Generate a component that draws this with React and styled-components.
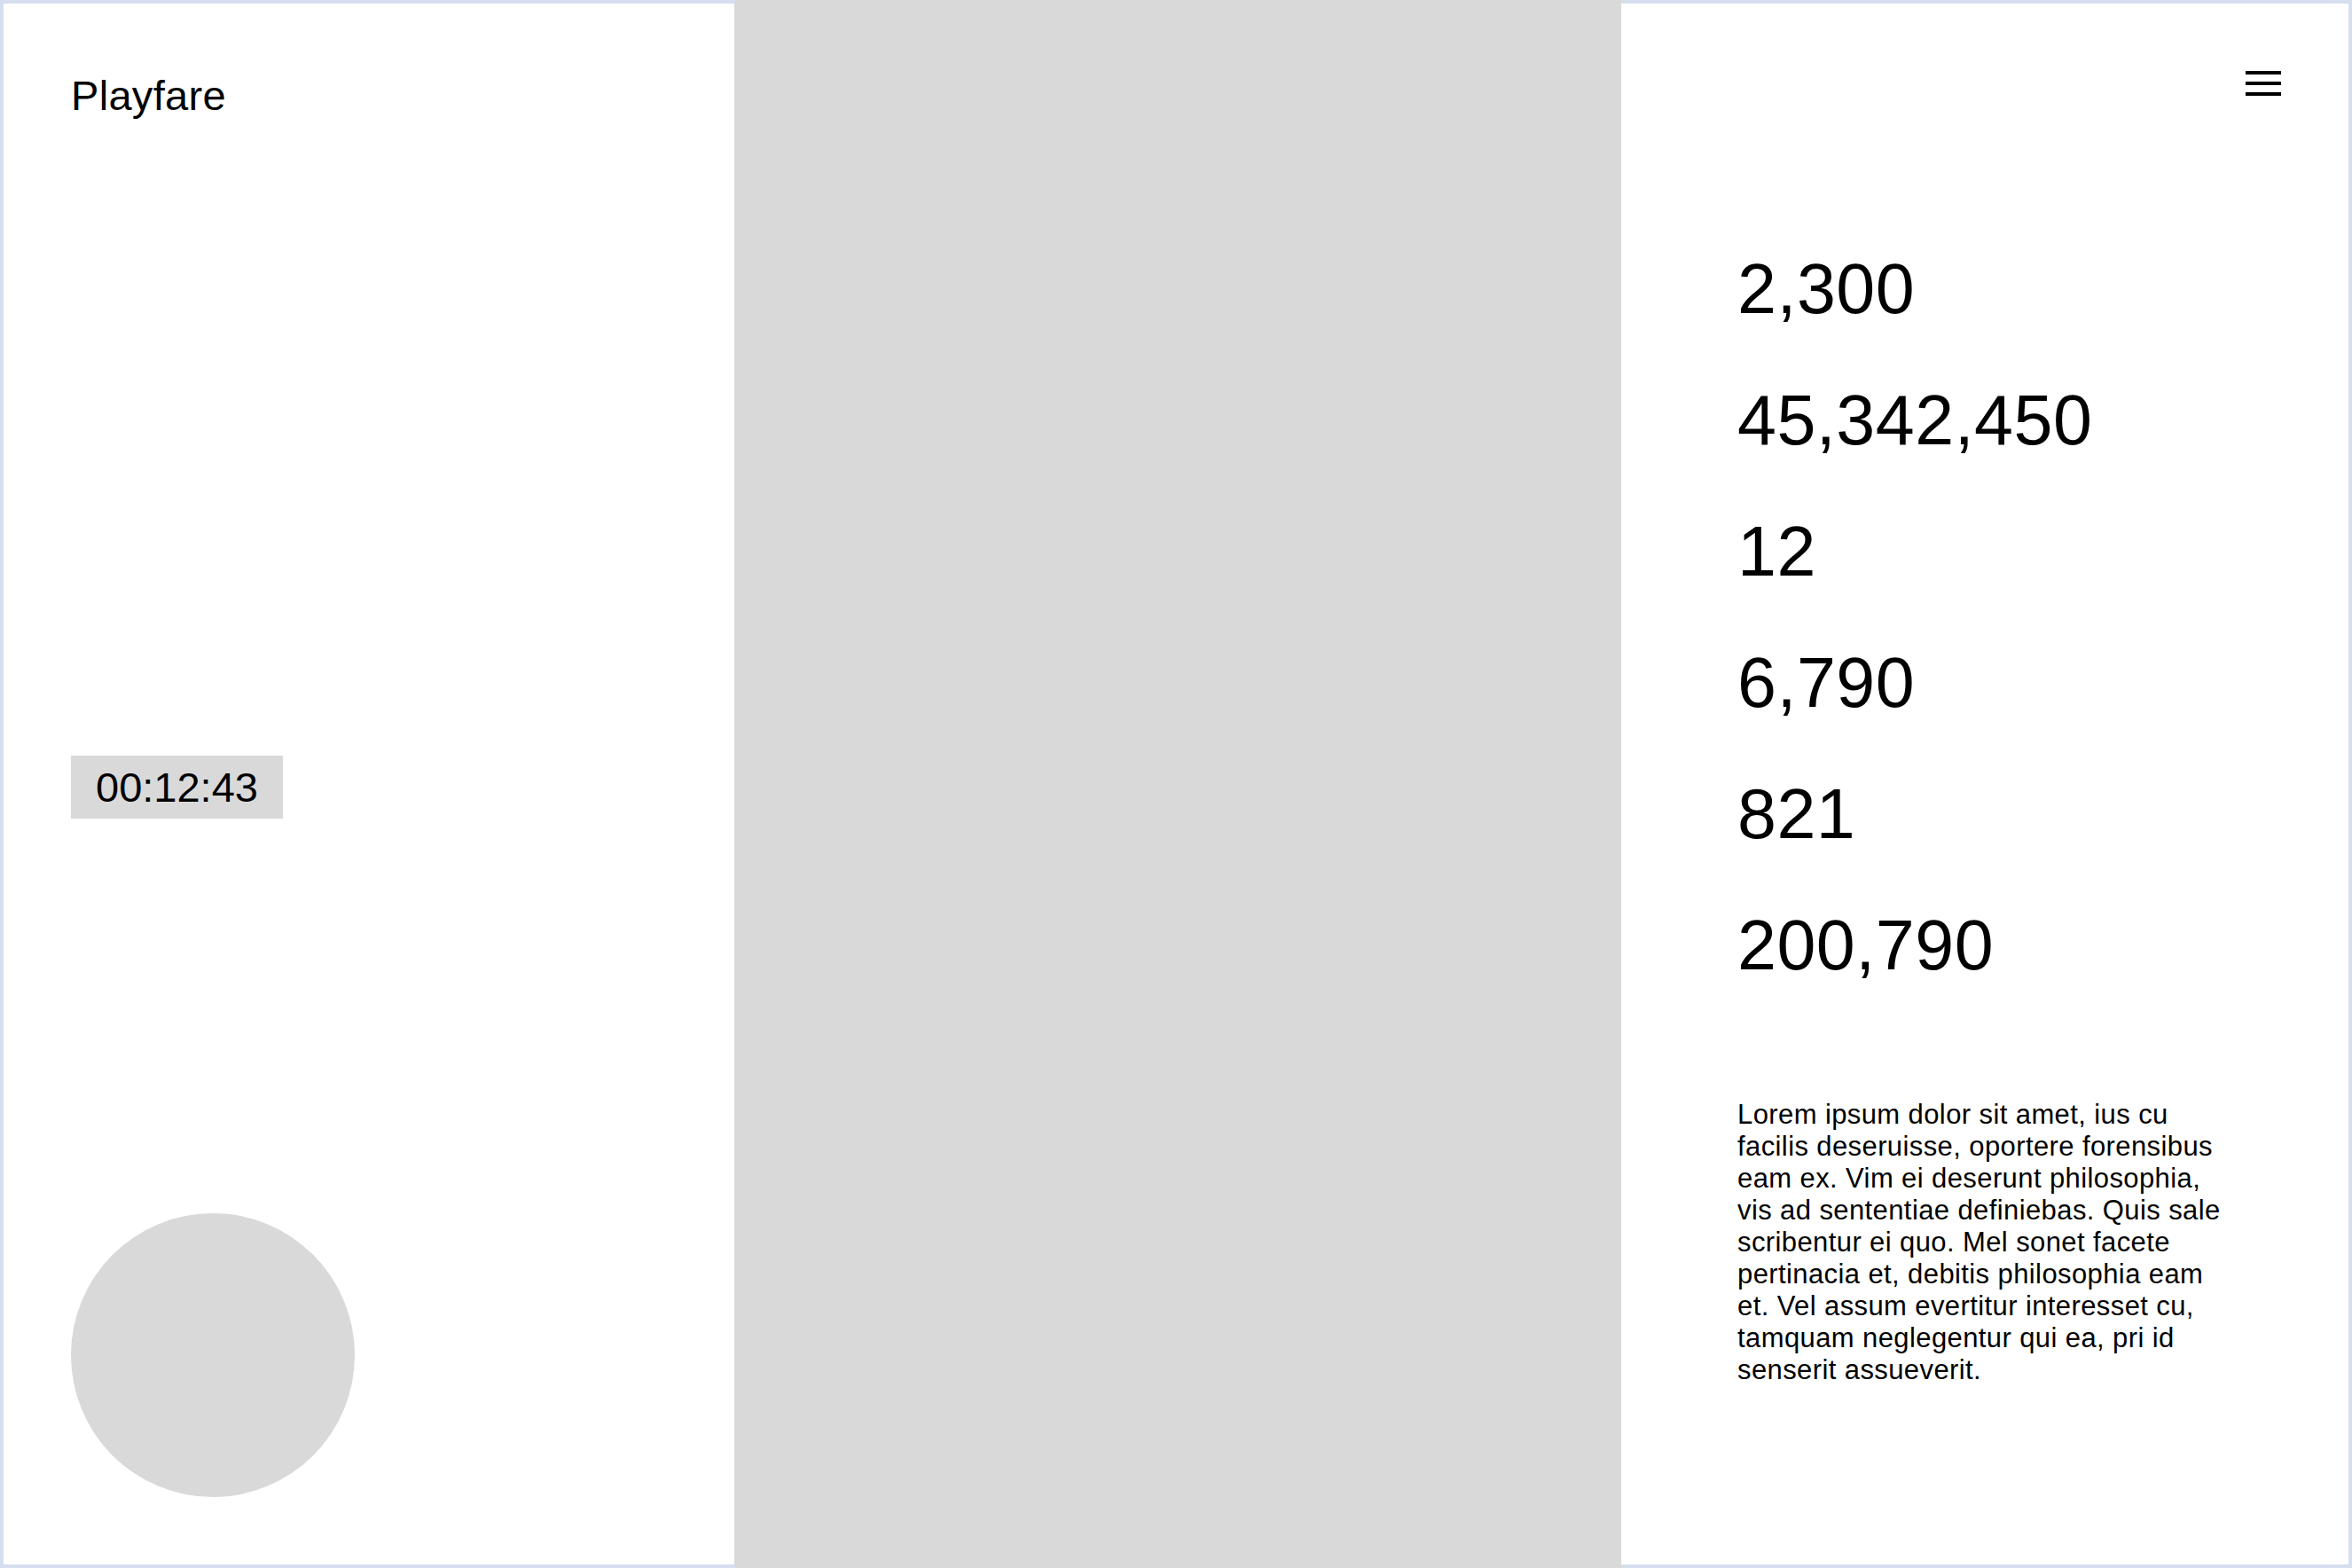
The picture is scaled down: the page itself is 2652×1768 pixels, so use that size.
import React from 'react';
import styled, { createGlobalStyle } from 'styled-components';

const GlobalStyle = createGlobalStyle`
  *, *::before, *::after {
    box-sizing: border-box;
  }
  body {
    margin: 0;
    background: #ffffff;
    color: #000000;
    font-family: "Liberation Sans", Arial, Helvetica, sans-serif;
  }
`;

const stats = ['2,300', '45,342,450', '12', '6,790', '821', '200,790'];

const Page = () => (
  <>
    <GlobalStyle />
    <Frame>
      <LeftPanel>
        <Brand>Playfare</Brand>
        <Timer>00:12:43</Timer>
        <Avatar />
      </LeftPanel>

      <Stage />

      <RightPanel>
        <TopBar>
          <MenuButton aria-label='menu'>
            <svg width='40' height='28' viewBox='0 0 40 28'>
              <rect x='0' y='0' width='40' height='4' fill='#000' />
              <rect x='0' y='12' width='40' height='4' fill='#000' />
              <rect x='0' y='24' width='40' height='4' fill='#000' />
            </svg>
          </MenuButton>
        </TopBar>
        <Content>
          <StatList>
            {stats.map((value) => (
              <Stat key={value}>{value}</Stat>
            ))}
          </StatList>
          <Blurb>
            Lorem ipsum dolor sit amet, ius cu facilis deseruisse, oportere forensibus eam ex. Vim ei deserunt philosophia, vis ad sententiae definiebas. Quis sale scribentur ei quo. Mel sonet facete pertinacia et, debitis philosophia eam et. Vel assum evertitur interesset cu, tamquam neglegentur qui ea, pri id senserit assueverit.
          </Blurb>
        </Content>
      </RightPanel>
    </Frame>
  </>
);

export default Page;

const Frame = styled.div`
  display: grid;
  grid-template-columns: 828px 1000px 824px;
  width: 2652px;
  height: 1768px;
`

const LeftPanel = styled.section`
  display: grid;
  grid-template-rows: 1fr auto 1fr;
  padding: 76px;
  border: 4px solid #d5dff0;
  border-right: none;
`

const Brand = styled.h1`
  align-self: start;
  margin: 0;
  font-size: 47px;
  font-weight: 400;
  letter-spacing: 0.3px;
  line-height: normal;
`

const Timer = styled.div`
  justify-self: start;
  margin-top: 7px;
  padding: 0 28px;
  background: #d9d9d9;
  font-size: 47px;
  line-height: 71px;
`

const Avatar = styled.div`
  align-self: end;
  width: 320px;
  height: 320px;
  border-radius: 50%;
  background: #d9d9d9;
`

const Stage = styled.div`
  background: #d9d9d9;
`

const RightPanel = styled.section`
  display: flex;
  flex-direction: column;
  padding: 76px;
  border: 4px solid #d5dff0;
  border-left: none;
`

const TopBar = styled.div`
  display: flex;
  justify-content: flex-end;
`

const MenuButton = styled.button`
  display: flex;
  padding: 0;
  border: none;
  background: none;
  cursor: pointer;
`

const Content = styled.div`
  padding-left: 55px;
  margin-top: 144px;
`

const StatList = styled.ul`
  list-style: none;
  margin: 0;
  padding: 0;
`

const Stat = styled.li`
  font-size: 79px;
  letter-spacing: 0.5px;
  line-height: 148px;
`

const Blurb = styled.p`
  width: 556px;
  margin: 99px 0 0;
  font-size: 31px;
  letter-spacing: 0.4px;
  line-height: 36px;
`
